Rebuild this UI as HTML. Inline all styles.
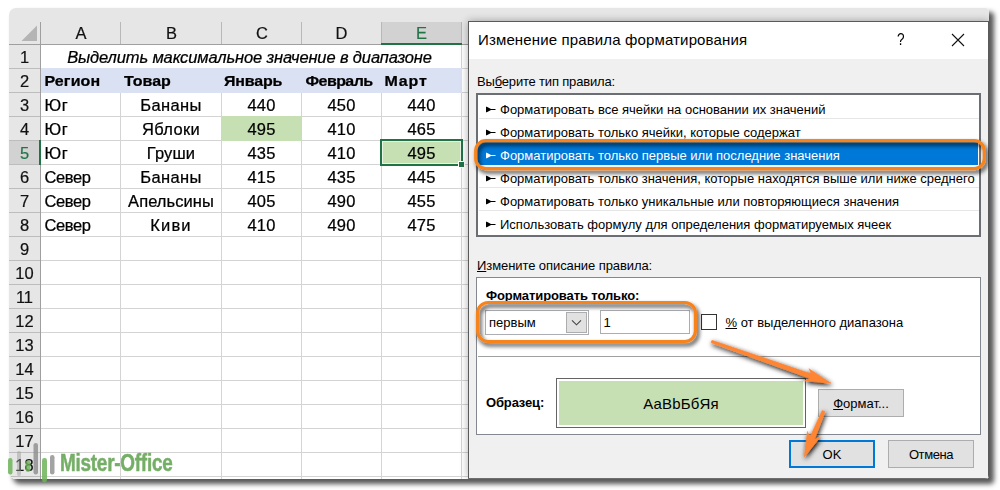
<!DOCTYPE html>
<html lang="ru"><head><meta charset="utf-8"><title>Изменение правила форматирования</title>
<style>
html,body{margin:0;padding:0;background:#fff;}
body{width:1000px;height:490px;position:relative;overflow:hidden;font-family:"Liberation Sans",sans-serif;color:#000;}
#shot{position:absolute;left:9px;top:8px;width:980px;height:471px;background:#fff;border-radius:7px 4px 4px 7px;overflow:hidden;}
#shad{position:absolute;left:9px;top:8px;width:980px;height:471px;border-radius:7px 4px 4px 7px;box-shadow:4.5px 4.5px 5px 0 rgba(0,0,0,.66);}
#in{position:absolute;left:-9px;top:-8px;width:1000px;height:490px;}
.abs{position:absolute;}
.hl{position:absolute;height:1px;background:#d4d4d4;}
.vl{position:absolute;width:1px;background:#d4d4d4;}
.ch{position:absolute;top:21px;height:23px;line-height:24.5px;text-align:center;font-size:16.5px;color:#111;-webkit-text-stroke:.2px;transform:scaleY(.965);transform-origin:0 18px;}
.rh{position:absolute;left:9px;width:31px;height:23px;line-height:24.5px;text-align:center;font-size:16.5px;color:#111;-webkit-text-stroke:.2px;transform:scaleY(.965);transform-origin:0 18px;}
.c{position:absolute;height:23px;letter-spacing:.15px;-webkit-text-stroke:.25px;line-height:24.5px;font-size:16.5px;white-space:nowrap;color:#000;transform:scaleY(.965);transform-origin:0 18px;}
.cc{text-align:center;}
.b{font-weight:bold;font-size:16px;line-height:24.9px;transform:scaleY(.97);}
.dl{position:absolute;font-size:13px;white-space:nowrap;line-height:16px;}
.li{position:absolute;left:479px;width:500px;height:23px;line-height:23px;font-size:13px;white-space:nowrap;}
.li i{position:absolute;left:7px;top:8px;width:10px;height:7px;}
.li span{position:absolute;left:21px;top:0;}
.sep{position:absolute;left:479px;width:500px;height:1px;background:#e6e6e6;}
.btn{position:absolute;box-sizing:border-box;background:#e1e1e1;border:1px solid #adadad;font-size:13px;text-align:center;white-space:nowrap;}
u{text-decoration:underline;text-underline-offset:1px;}
</style></head><body>
<div id="shad"></div>
<div id="shot"><div id="in">

<div class="abs" style="left:9px;top:8px;width:460px;height:36px;background:#e6e6e6"></div>
<div class="abs" style="left:9px;top:44px;width:31px;height:435px;background:#e6e6e6"></div>
<div class="abs" style="left:462px;top:8px;width:528px;height:14px;background:#e6e6e6"></div>
<div class="abs" style="left:382px;top:22px;width:80px;height:21px;background:#d2d2d2"></div>
<div class="abs" style="left:9px;top:141px;width:31px;height:23px;background:#d2d2d2"></div>
<div class="hl" style="left:9px;top:44px;width:460px;background:#9f9f9f"></div>
<div class="hl" style="left:41px;top:68px;width:428px"></div>
<div class="hl" style="left:9px;top:68px;width:31px;background:#bdbdbd"></div>
<div class="hl" style="left:41px;top:92px;width:428px"></div>
<div class="hl" style="left:9px;top:92px;width:31px;background:#bdbdbd"></div>
<div class="hl" style="left:41px;top:116px;width:428px"></div>
<div class="hl" style="left:9px;top:116px;width:31px;background:#bdbdbd"></div>
<div class="hl" style="left:41px;top:140px;width:428px"></div>
<div class="hl" style="left:9px;top:140px;width:31px;background:#bdbdbd"></div>
<div class="hl" style="left:41px;top:164px;width:428px"></div>
<div class="hl" style="left:9px;top:164px;width:31px;background:#bdbdbd"></div>
<div class="hl" style="left:41px;top:188px;width:428px"></div>
<div class="hl" style="left:9px;top:188px;width:31px;background:#bdbdbd"></div>
<div class="hl" style="left:41px;top:212px;width:428px"></div>
<div class="hl" style="left:9px;top:212px;width:31px;background:#bdbdbd"></div>
<div class="hl" style="left:41px;top:236px;width:428px"></div>
<div class="hl" style="left:9px;top:236px;width:31px;background:#bdbdbd"></div>
<div class="hl" style="left:41px;top:260px;width:428px"></div>
<div class="hl" style="left:9px;top:260px;width:31px;background:#bdbdbd"></div>
<div class="hl" style="left:41px;top:284px;width:428px"></div>
<div class="hl" style="left:9px;top:284px;width:31px;background:#bdbdbd"></div>
<div class="hl" style="left:41px;top:308px;width:428px"></div>
<div class="hl" style="left:9px;top:308px;width:31px;background:#bdbdbd"></div>
<div class="hl" style="left:41px;top:332px;width:428px"></div>
<div class="hl" style="left:9px;top:332px;width:31px;background:#bdbdbd"></div>
<div class="hl" style="left:41px;top:356px;width:428px"></div>
<div class="hl" style="left:9px;top:356px;width:31px;background:#bdbdbd"></div>
<div class="hl" style="left:41px;top:380px;width:428px"></div>
<div class="hl" style="left:9px;top:380px;width:31px;background:#bdbdbd"></div>
<div class="hl" style="left:41px;top:404px;width:428px"></div>
<div class="hl" style="left:9px;top:404px;width:31px;background:#bdbdbd"></div>
<div class="hl" style="left:41px;top:428px;width:428px"></div>
<div class="hl" style="left:9px;top:428px;width:31px;background:#bdbdbd"></div>
<div class="hl" style="left:41px;top:452px;width:428px"></div>
<div class="hl" style="left:9px;top:452px;width:31px;background:#bdbdbd"></div>
<div class="hl" style="left:41px;top:476px;width:428px"></div>
<div class="hl" style="left:9px;top:476px;width:31px;background:#bdbdbd"></div>
<div class="vl" style="left:40px;top:22px;height:457px;background:#9f9f9f"></div>
<div class="vl" style="left:120px;top:22px;height:22px;background:#b8b8b8"></div>
<div class="vl" style="left:120px;top:93px;height:386px"></div>
<div class="vl" style="left:221px;top:22px;height:22px;background:#b8b8b8"></div>
<div class="vl" style="left:221px;top:93px;height:386px"></div>
<div class="vl" style="left:301px;top:22px;height:22px;background:#b8b8b8"></div>
<div class="vl" style="left:301px;top:93px;height:386px"></div>
<div class="vl" style="left:381px;top:22px;height:22px;background:#b8b8b8"></div>
<div class="vl" style="left:381px;top:93px;height:386px"></div>
<div class="vl" style="left:461px;top:22px;height:22px;background:#b8b8b8"></div>
<div class="vl" style="left:461px;top:45px;height:434px"></div>
<div class="abs" style="left:41px;top:68px;width:421px;height:25px;background:#d9e1f2"></div>
<div class="abs" style="left:381px;top:43px;width:81px;height:2px;background:#217346"></div>
<div class="abs" style="left:39px;top:140px;width:2px;height:25px;background:#217346"></div>
<svg class="abs" style="left:20px;top:24px" width="18" height="18" viewBox="0 0 18 18"><path d="M17 1.5 L17 17 L1.5 17 Z" fill="#b4b4b4"/></svg>
<div class="ch" style="left:61px;width:40px;">A</div>
<div class="ch" style="left:151.5px;width:40px;">B</div>
<div class="ch" style="left:242px;width:40px;">C</div>
<div class="ch" style="left:321.5px;width:40px;">D</div>
<div class="ch" style="left:401.5px;width:40px;color:#217346;">E</div>
<div class="rh" style="top:45px;">1</div>
<div class="rh" style="top:69px;">2</div>
<div class="rh" style="top:93px;">3</div>
<div class="rh" style="top:117px;">4</div>
<div class="rh" style="top:141px;color:#217346;">5</div>
<div class="rh" style="top:165px;">6</div>
<div class="rh" style="top:189px;">7</div>
<div class="rh" style="top:213px;">8</div>
<div class="rh" style="top:237px;">9</div>
<div class="rh" style="top:261px;">10</div>
<div class="rh" style="top:285px;">11</div>
<div class="rh" style="top:309px;">12</div>
<div class="rh" style="top:333px;">13</div>
<div class="rh" style="top:357px;">14</div>
<div class="rh" style="top:381px;">15</div>
<div class="rh" style="top:405px;">16</div>
<div class="rh" style="top:429px;">17</div>
<div class="rh" style="top:453px;">18</div>
<div class="abs" style="left:221px;top:116px;width:81px;height:25px;background:#c6e0b4"></div>
<div class="abs" style="left:382px;top:141px;width:79px;height:23px;background:#c6e0b4"></div>
<div class="c cc" style="left:39.5px;top:45px;width:420px;font-style:italic;letter-spacing:-0.13px">Выделить максимальное значение в диапазоне</div>
<div class="c b" style="left:44.5px;top:69px;letter-spacing:0.1px">Регион</div>
<div class="c b" style="left:124px;top:69px;letter-spacing:0px">Товар</div>
<div class="c b" style="left:224px;top:69px;letter-spacing:-0.2px">Январь</div>
<div class="c b" style="left:305.5px;top:69px;letter-spacing:-0.58px">Февраль</div>
<div class="c b" style="left:384.5px;top:69px;letter-spacing:0.83px">Март</div>
<div class="c" style="left:44.5px;top:93px;letter-spacing:0.5px">Юг</div>
<div class="c cc" style="left:121px;top:93px;width:100px;letter-spacing:0.4px">Бананы</div>
<div class="c cc" style="left:222px;top:93px;width:79px">440</div>
<div class="c cc" style="left:302px;top:93px;width:79px">450</div>
<div class="c cc" style="left:382px;top:93px;width:79px">440</div>
<div class="c" style="left:44.5px;top:117px;letter-spacing:0.5px">Юг</div>
<div class="c cc" style="left:121px;top:117px;width:100px;letter-spacing:0.3px">Яблоки</div>
<div class="c cc" style="left:222px;top:117px;width:79px">495</div>
<div class="c cc" style="left:302px;top:117px;width:79px">410</div>
<div class="c cc" style="left:382px;top:117px;width:79px">465</div>
<div class="c" style="left:44.5px;top:141px;letter-spacing:0.5px">Юг</div>
<div class="c cc" style="left:121px;top:141px;width:100px;letter-spacing:0.12px">Груши</div>
<div class="c cc" style="left:222px;top:141px;width:79px">435</div>
<div class="c cc" style="left:302px;top:141px;width:79px">410</div>
<div class="c cc" style="left:382px;top:141px;width:79px">495</div>
<div class="c" style="left:44.5px;top:165px;letter-spacing:-0.38px">Север</div>
<div class="c cc" style="left:121px;top:165px;width:100px;letter-spacing:0.4px">Бананы</div>
<div class="c cc" style="left:222px;top:165px;width:79px">415</div>
<div class="c cc" style="left:302px;top:165px;width:79px">435</div>
<div class="c cc" style="left:382px;top:165px;width:79px">445</div>
<div class="c" style="left:44.5px;top:189px;letter-spacing:-0.38px">Север</div>
<div class="c cc" style="left:121px;top:189px;width:100px;letter-spacing:0.06px">Апельсины</div>
<div class="c cc" style="left:222px;top:189px;width:79px">405</div>
<div class="c cc" style="left:302px;top:189px;width:79px">490</div>
<div class="c cc" style="left:382px;top:189px;width:79px">455</div>
<div class="c" style="left:44.5px;top:213px;letter-spacing:-0.38px">Север</div>
<div class="c cc" style="left:121px;top:213px;width:100px;letter-spacing:1.17px">Киви</div>
<div class="c cc" style="left:222px;top:213px;width:79px">410</div>
<div class="c cc" style="left:302px;top:213px;width:79px">490</div>
<div class="c cc" style="left:382px;top:213px;width:79px">475</div>
<div class="abs" style="left:380px;top:139px;width:79px;height:23px;border:2px solid #217346;box-shadow:inset 0 0 0 1px #e9f3e2"></div>
<div class="abs" style="left:458px;top:161px;width:5px;height:5px;background:#217346;border:1px solid #fff"></div>
<div class="abs" style="left:468px;top:21px;width:521px;height:457px;box-sizing:border-box;background:#f0f0f0;border:1px solid #5a5a5a;border-bottom:0;box-shadow:0 0 8px 0 rgba(0,0,0,.32)"></div>
<div class="abs" style="left:469px;top:22px;width:519px;height:37px;background:#fff"></div>
<div class="dl" style="left:478px;top:30px;font-size:15px;line-height:20px;letter-spacing:0.14px">Изменение правила форматирования</div>
<div class="dl" style="left:897px;top:30px;font-size:16px;line-height:20px;transform:scaleX(.85);transform-origin:0 0">?</div>
<svg class="abs" style="left:951px;top:33px" width="14" height="14" viewBox="0 0 14 14"><path d="M1 1 L13 13 M13 1 L1 13" stroke="#111" stroke-width="1.1" fill="none"/></svg>
<div class="dl" style="left:477px;top:73.5px;letter-spacing:-0.18px">Вы<u>б</u>ерите тип правила:</div>
<div class="abs" style="left:476px;top:93px;width:505px;height:144px;box-sizing:border-box;background:#fff;border:2px solid #6b6e73"></div>
<div class="li" style="top:98px;"><i><svg width="10" height="7" viewBox="0 0 10 7" style="display:block"><path d="M0 .8 L.8 .8 L5 3 L9.5 3 L9.5 4 L5 4 L.8 6.2 L0 6.2 Z" fill="#000"/></svg></i><span>Форматировать все ячейки на основании их значений</span></div>
<div class="sep" style="top:118px"></div>
<div class="li" style="top:121px;"><i><svg width="10" height="7" viewBox="0 0 10 7" style="display:block"><path d="M0 .8 L.8 .8 L5 3 L9.5 3 L9.5 4 L5 4 L.8 6.2 L0 6.2 Z" fill="#000"/></svg></i><span>Форматировать только ячейки, которые содержат</span></div>
<div class="abs" style="left:478px;top:142px;width:500px;height:23px;background:#0078d7"></div>
<div class="li" style="top:144px;color:#fff;"><i><svg width="10" height="7" viewBox="0 0 10 7" style="display:block"><path d="M0 .8 L.8 .8 L5 3 L9.5 3 L9.5 4 L5 4 L.8 6.2 L0 6.2 Z" fill="#fff"/></svg></i><span>Форматировать только первые или последние значения</span></div>
<div class="li" style="top:167px;"><i><svg width="10" height="7" viewBox="0 0 10 7" style="display:block"><path d="M0 .8 L.8 .8 L5 3 L9.5 3 L9.5 4 L5 4 L.8 6.2 L0 6.2 Z" fill="#000"/></svg></i><span>Форматировать только значения, которые находятся выше или ниже среднего</span></div>
<div class="sep" style="top:187px"></div>
<div class="li" style="top:190px;"><i><svg width="10" height="7" viewBox="0 0 10 7" style="display:block"><path d="M0 .8 L.8 .8 L5 3 L9.5 3 L9.5 4 L5 4 L.8 6.2 L0 6.2 Z" fill="#000"/></svg></i><span>Форматировать только уникальные или повторяющиеся значения</span></div>
<div class="sep" style="top:210px"></div>
<div class="li" style="top:213px;"><i><svg width="10" height="7" viewBox="0 0 10 7" style="display:block"><path d="M0 .8 L.8 .8 L5 3 L9.5 3 L9.5 4 L5 4 L.8 6.2 L0 6.2 Z" fill="#000"/></svg></i><span>Использовать формулу для определения форматируемых ячеек</span></div>
<div class="dl" style="left:477px;top:258px;letter-spacing:-0.08px"><u>И</u>змените описание правила:</div>
<div class="abs" style="left:476px;top:277px;width:505px;height:158px;box-sizing:border-box;background:#fff;border:1px solid #828790"></div>
<div class="dl" style="left:486px;top:288px;font-weight:bold;letter-spacing:-0.1px">Форматировать только:</div>
<div class="abs" style="left:485px;top:310px;width:104px;height:25px;box-sizing:border-box;background:#fff;border:1px solid #abadb3"></div>
<div class="abs" style="left:566px;top:312px;width:21px;height:21px;box-sizing:border-box;background:#e1e1e1;border:1px solid #adadad"></div>
<svg class="abs" style="left:571px;top:319px" width="11" height="8" viewBox="0 0 11 8"><path d="M1 1.3 L5.5 5.8 L10 1.3" stroke="#444" stroke-width="1.1" fill="none"/></svg>
<div class="dl" style="left:489px;top:315px">первым</div>
<div class="abs" style="left:600px;top:310px;width:90px;height:24px;box-sizing:border-box;background:#fff;border:1px solid #abadb3"></div>
<div class="dl" style="left:603.5px;top:315px">1</div>
<div class="abs" style="left:701px;top:314px;width:16px;height:16px;box-sizing:border-box;background:#fff;border:1px solid #333"></div>
<div class="dl" style="left:725.5px;top:315px"><u>%</u> от выделенного диапазона</div>
<div class="abs" style="left:478px;top:356px;width:502px;height:1px;background:#a0a0a0"></div>
<div class="dl" style="left:486px;top:395px;font-weight:bold;letter-spacing:-0.15px">Образец:</div>
<div class="abs" style="left:556px;top:378px;width:250px;height:50px;box-sizing:border-box;background:#fff;border:1px solid #646464"></div>
<div class="abs" style="left:559px;top:381px;width:244px;height:44px;background:#c6e0b4;text-align:center;font-size:15px;line-height:46px;letter-spacing:0.15px">АаВbБбЯя</div>
<div class="btn" style="left:818px;top:389px;width:86px;height:28px;line-height:28px"><u>Ф</u>ормат...</div>
<div class="btn" style="left:789px;top:440px;width:86px;height:28px;line-height:25px;border:2px solid #0078d7">OK</div>
<div class="btn" style="left:888px;top:440px;width:86px;height:28px;line-height:28px;letter-spacing:-0.4px">Отмена</div>
<div class="abs" style="left:468px;top:478px;width:521px;height:1px;background:#6e6e6e"></div>
<svg class="abs" style="left:440px;top:120px" width="560" height="370" viewBox="440 120 560 370">
<defs><filter id="sh" x="-20%" y="-20%" width="140%" height="140%"><feGaussianBlur in="SourceAlpha" stdDeviation="2.2"/><feOffset dx="1.5" dy="3"/><feComponentTransfer><feFuncA type="linear" slope=".8"/></feComponentTransfer><feMerge><feMergeNode/><feMergeNode in="SourceGraphic"/></feMerge></filter><filter id="sh2" x="-20%" y="-20%" width="140%" height="140%"><feGaussianBlur in="SourceAlpha" stdDeviation="2.4"/><feOffset dx="1.2" dy="2"/><feComponentTransfer><feFuncA type="linear" slope="1"/></feComponentTransfer><feMerge><feMergeNode/><feMergeNode in="SourceGraphic"/></feMerge></filter></defs>
<g filter="url(#sh)">
<rect x="475.7" y="140.6" width="508.6" height="28" rx="10" ry="10" fill="none" stroke="#f7831c" stroke-width="3.2"/>
<rect x="477.6" y="302.5" width="217.8" height="39" rx="10.5" ry="10.5" fill="none" stroke="#f7831c" stroke-width="3.2"/>
</g><g filter="url(#sh2)">
<path d="M711.93 340.27 L811.46 373.96 L808.93 368.74 L831 383.2 L804.73 380.82 L809.94 378.3 L711.07 342.73 Z" fill="#ff8533" stroke="#ff8533" stroke-width=".6" stroke-linejoin="round"/>
<path d="M822.22 410.52 L809.93 437.23 L807.45 431.52 L804.3 457.1 L820.35 436.94 L814.53 439.17 L824.98 411.68 Z" fill="#ff8533" stroke="#ff8533" stroke-width=".6" stroke-linejoin="round"/>
</g></svg>
</div></div>
<svg class="abs" style="left:0;top:438px" width="60" height="52" viewBox="0 438 60 52">
<rect x="17" y="451" width="4" height="25" rx="2" fill="#9a9a9a" fill-opacity=".45"/>
<rect x="33.5" y="443" width="4.5" height="31.5" rx="2.2" fill="#8c8c8c" fill-opacity=".8"/>
<rect x="50" y="455" width="4.5" height="19.5" rx="2.2" fill="#8c8c8c" fill-opacity=".8"/>
<rect x="8" y="458" width="4.5" height="16.5" rx="2.2" fill="#6db35a" fill-opacity=".85"/>
<rect x="25.5" y="460.5" width="5" height="11.5" rx="2.4" fill="#6db35a" fill-opacity=".8"/>
<rect x="42" y="458" width="5" height="24.5" rx="2.4" fill="#6db35a" fill-opacity=".85"/>
</svg>
<div class="abs" style="left:60px;top:450px;font-size:23.5px;line-height:26px;font-weight:bold;color:#6aa85a;-webkit-text-stroke:.5px #6aa85a;opacity:.92;transform:scaleX(.805);transform-origin:0 0;white-space:nowrap;letter-spacing:-0.3px">Mister-Office</div>
</body></html>
